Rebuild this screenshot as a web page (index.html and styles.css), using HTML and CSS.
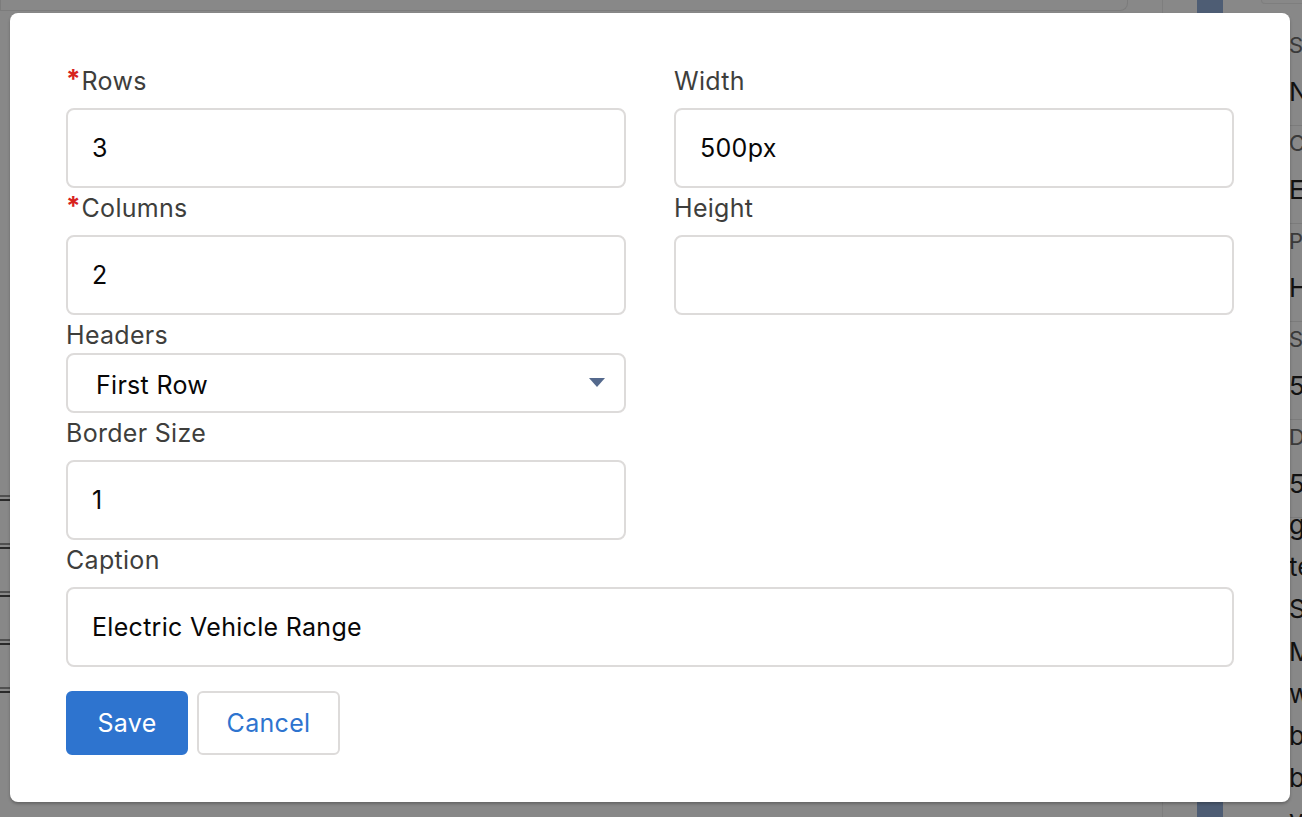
FILE: index.html
```html
<!DOCTYPE html>
<html lang="en">
<head>
<meta charset="utf-8">
<title>Table properties</title>
<link rel="stylesheet" href="styles.css">
</head>
<body>
<div class="page">
  <div class="page-main">
    <div class="top-box"></div>
    <div class="left-lines">
      <div class="dbl"></div><div class="dbl"></div><div class="dbl"></div><div class="dbl"></div><div class="dbl"></div>
    </div>
  </div>
  <div class="page-col"></div>
  <div class="page-bar"></div>
  <div class="page-gap"><div class="mini-box"></div></div>
  <div class="page-side">
    <div class="pair"><span class="k">Status</span><span class="v">New</span></div>
    <div class="pair"><span class="k">Category</span><span class="v">Electric</span></div>
    <div class="pair"><span class="k">Priority</span><span class="v">High</span></div>
    <div class="pair"><span class="k">Size</span><span class="v">500</span></div>
    <div class="pair"><span class="k">Date</span><span class="v">5/12</span></div>
    <div class="para">
      <p>good</p><p>text</p><p>Some</p><p>More</p><p>want</p><p>best</p><p>both</p><p>yes</p>
    </div>
  </div>
</div>

<div class="overlay">
  <div class="modal">
    <form class="form-grid">
      <div class="field">
        <label class="label"><span class="req">*</span>Rows</label>
        <div class="input">3</div>
      </div>
      <div class="field">
        <label class="label">Width</label>
        <div class="input">500px</div>
      </div>
      <div class="field">
        <label class="label"><span class="req">*</span>Columns</label>
        <div class="input">2</div>
      </div>
      <div class="field">
        <label class="label">Height</label>
        <div class="input"></div>
      </div>
      <div class="field">
        <label class="label">Headers</label>
        <div class="select">
          <span>First Row</span>
          <svg class="caret" width="16" height="10" viewBox="0 0 16 10"><path d="M0 0 H16 L8 9 Z" fill="#54698d"/></svg>
        </div>
      </div>
      <div class="field empty"></div>
      <div class="field">
        <label class="label">Border Size</label>
        <div class="input">1</div>
      </div>
      <div class="field empty"></div>
      <div class="field wide">
        <label class="label">Caption</label>
        <div class="input">Electric Vehicle Range</div>
      </div>
    </form>
    <div class="actions">
      <button class="btn btn-brand" type="button">Save</button>
      <button class="btn btn-neutral" type="button">Cancel</button>
    </div>
  </div>
</div>
</body>
</html>
```

FILE: styles.css
```css
* { box-sizing: border-box; }
html, body {
  margin: 0;
  padding: 0;
  width: 1302px;
  height: 817px;
  overflow: hidden;
  background: #888888;
  font-family: Inter, "Noto Sans", "Liberation Sans", sans-serif;
}

/* dimmed page behind the dialog */
.page {
  display: flex;
  height: 817px;
  width: 1302px;
  overflow: hidden;
}
.page > * { flex-shrink: 0; }
.page-main {
  width: 1162px;
  display: flex;
  flex-direction: column;
}
.top-box {
  width: 1128px;
  height: 11px;
  border: 1px solid #7c7c7c;
  border-top: none;
  border-bottom-right-radius: 8px;
}
.left-lines {
  margin-top: 484px;
  width: 12px;
  display: flex;
  flex-direction: column;
  gap: 42px;
}
.dbl {
  height: 6px;
  border-top: 2px solid #505050;
  border-bottom: 2px solid #2a2a2a;
}
.page-col {
  width: 35px;
  border-left: 1px solid #7e7e7e;
}
.page-bar {
  width: 26px;
  background: #4e5d74;
}
.page-gap {
  width: 64px;
  padding-left: 38px;
}
.mini-box {
  width: 60px;
  height: 4px;
  border: 1px solid #7e7e7e;
  border-top: none;
  border-bottom-left-radius: 8px;
}
.page-side {
  width: 200px;
  padding-top: 28px;
  padding-left: 2px;
  display: flex;
  flex-direction: column;
  color: #1d1d1d;
  font-size: 24px;
  overflow: hidden;
}
.pair {
  flex-shrink: 0;
  display: flex;
  flex-direction: column;
  height: 98px;
  border-bottom: 1px solid #7b7b7b;
}
.pair .k { color: #3a3a3a; font-size: 22px; line-height: 34px; }
.pair .v { color: #111; font-size: 26px; line-height: 60px; }
.para { flex-shrink: 0; margin-top: -14px; }
.para p { margin: 0; line-height: 42.2px; font-size: 26px; color: #111; }

/* dialog */
.overlay {
  position: absolute;
  left: 0;
  top: 0;
  width: 1302px;
  height: 817px;
}
.modal {
  position: absolute;
  left: 10px;
  top: 13px;
  width: 1280px;
  height: 789px;
  background: #ffffff;
  border-radius: 8px;
  box-shadow: 0 2px 3px rgba(0, 0, 0, 0.25);
  padding: 48px 56px 47px 56px;
}
.form-grid {
  margin: 0;
  display: grid;
  grid-template-columns: 560px 560px;
  column-gap: 48px;
}
.field {
  display: flex;
  flex-direction: column;
}
.field.wide { grid-column: 1 / span 2; }
.label {
  height: 38px;
  padding-top: 1px;
  font-size: 25px;
  letter-spacing: 0.3px;
  color: #3e3e3c;
  display: flex;
  align-items: center;
}
.req {
  color: #d7231e;
  font-size: 26px;
  font-weight: 700;
  margin-right: 1px;
  position: relative;
  top: -2px;
  letter-spacing: 0;
}
.input {
  margin-top: 9px;
  height: 80px;
  border: 2px solid #dddbda;
  border-radius: 8px;
  padding: 0 24px;
  display: flex;
  align-items: center;
  font-size: 25px;
  letter-spacing: 0.3px;
  color: #080707;
}
.select {
  height: 60px;
  border: 2px solid #dddbda;
  border-radius: 8px;
  padding: 4px 19px 0 28px;
  display: flex;
  align-items: center;
  justify-content: space-between;
  font-size: 25px;
  letter-spacing: 0.3px;
  color: #080707;
}
.caret { display: block; margin-top: -4px; }
.actions {
  margin-top: 24px;
  display: flex;
  gap: 9px;
}
.btn {
  height: 64px;
  border-radius: 6px;
  font-family: inherit;
  font-size: 25px;
  letter-spacing: 0.3px;
  padding: 0;
  cursor: pointer;
}
.btn-brand {
  width: 122px;
  background: #2e74cf;
  border: 2px solid #2e74cf;
  color: #ffffff;
}
.btn-neutral {
  width: 143px;
  background: #ffffff;
  border: 2px solid #dddbda;
  color: #2e74cf;
}
```
